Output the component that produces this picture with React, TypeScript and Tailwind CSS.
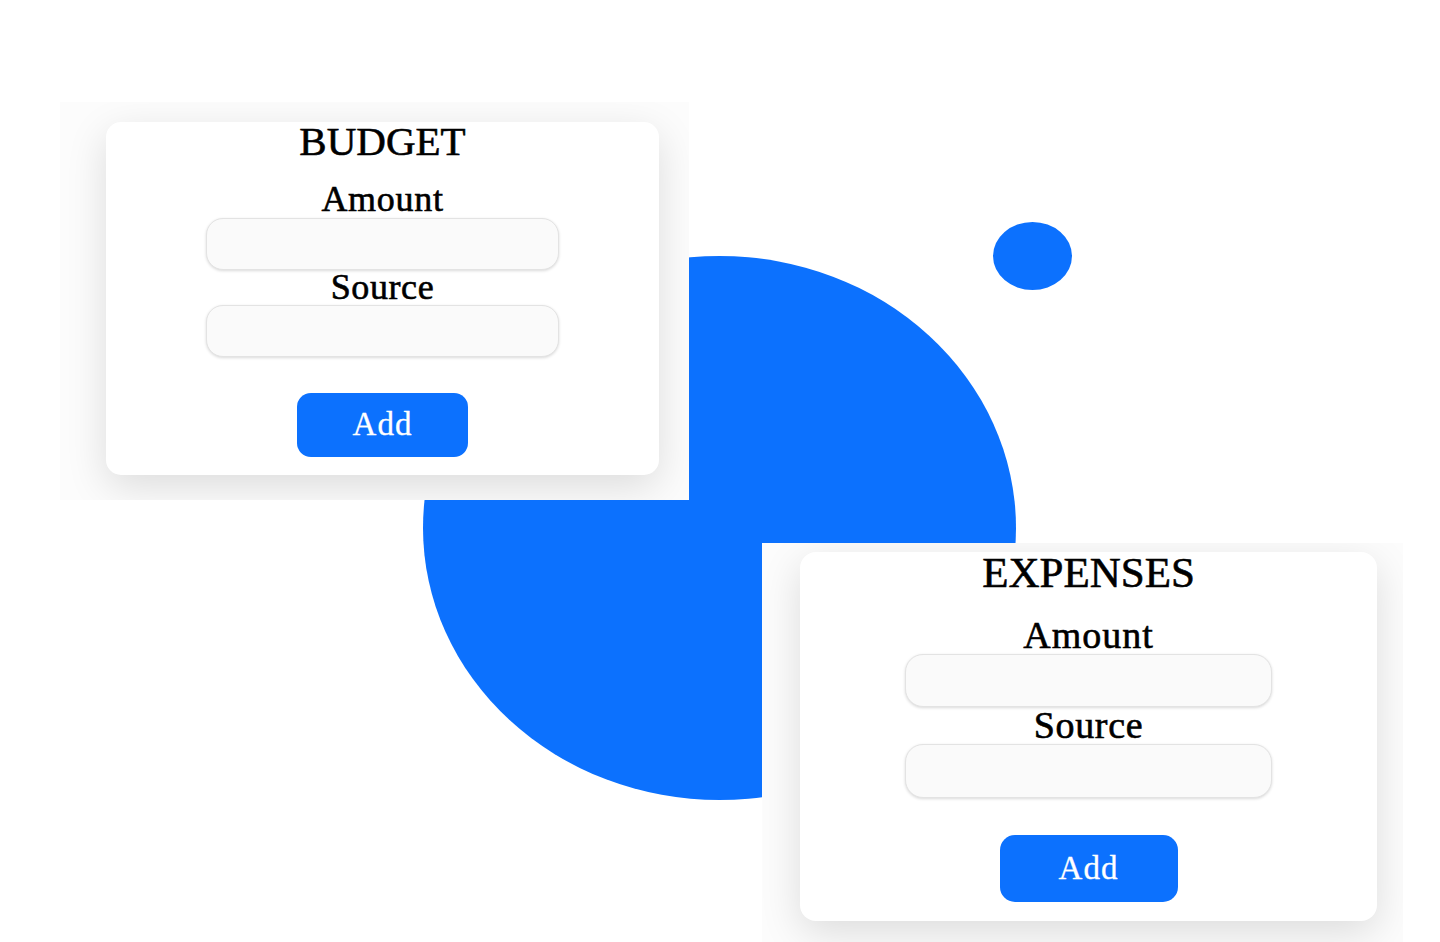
import React from "react";

const serif = { fontFamily: '"Liberation Serif", "Times New Roman", serif' };

const inputCls =
  "bg-[#fafafa] border border-[#e3e3e3] shadow-[0_1px_3px_rgba(0,0,0,0.15)] outline-none";

export default function App() {
  return (
    <div
      className="relative w-[1440px] h-[942px] overflow-hidden bg-white text-black"
      style={serif}
    >
      {/* decorative blobs */}
      <div className="absolute left-[423px] top-[256px] w-[593px] h-[544px] rounded-[50%] bg-[#0c71fe]" />
      <div className="absolute left-[993px] top-[222px] w-[79px] h-[68px] rounded-[50%] bg-[#0c71fe]" />

      <div className="relative flex flex-col">
        {/* BUDGET */}
        <div className="ml-[60px] mt-[102px] w-[629px] h-[398px] bg-[#fcfcfc] overflow-hidden pl-[46px] pt-[20px]">
          <div className="w-[553px] rounded-[15px] bg-white shadow-[0_12px_40px_rgba(0,0,0,0.13)] flex flex-col items-center pb-[18px] [-webkit-text-stroke:0.6px_black]">
            <h2 className="text-[41px] leading-none -mt-[1px]">BUDGET</h2>
            <label className="text-[36px] leading-none tracking-[0.7px] mt-[19px]">Amount</label>
            <input className={`mt-[1px] w-[353px] h-[52px] rounded-[17px] ${inputCls}`} />
            <label className="text-[36px] leading-none tracking-[0.6px] -mt-[1px]">Source</label>
            <input className={`mt-[0px] w-[353px] h-[52px] rounded-[17px] ${inputCls}`} />
            <button className="mt-[36px] w-[171px] h-[64px] rounded-[14px] bg-[#0c71fe] text-white text-[33px] tracking-[1px] [-webkit-text-stroke:0.3px_white]">
              Add
            </button>
          </div>
        </div>

        {/* EXPENSES */}
        <div className="ml-[762px] mt-[43px] w-[641px] h-[399px] bg-[#fcfcfc] overflow-hidden pl-[38px] pt-[9px]">
          <div className="w-[577px] rounded-[16px] bg-white shadow-[0_12px_40px_rgba(0,0,0,0.13)] flex flex-col items-center pb-[19px] [-webkit-text-stroke:0.6px_black]">
            <h2 className="text-[43px] leading-none -mt-[1px]">EXPENSES</h2>
            <label className="text-[38px] leading-none tracking-[1px] mt-[22px]">Amount</label>
            <input className={`mt-[0px] w-[367px] h-[53px] rounded-[18px] ${inputCls}`} />
            <label className="text-[38px] leading-none tracking-[0.7px] -mt-[1px]">Source</label>
            <input className={`mt-[0px] w-[367px] h-[54px] rounded-[18px] ${inputCls}`} />
            <button className="mt-[37px] w-[178px] h-[67px] rounded-[15px] bg-[#0c71fe] text-white text-[33px] tracking-[1px] [-webkit-text-stroke:0.3px_white]">
              Add
            </button>
          </div>
        </div>
      </div>
    </div>
  );
}
